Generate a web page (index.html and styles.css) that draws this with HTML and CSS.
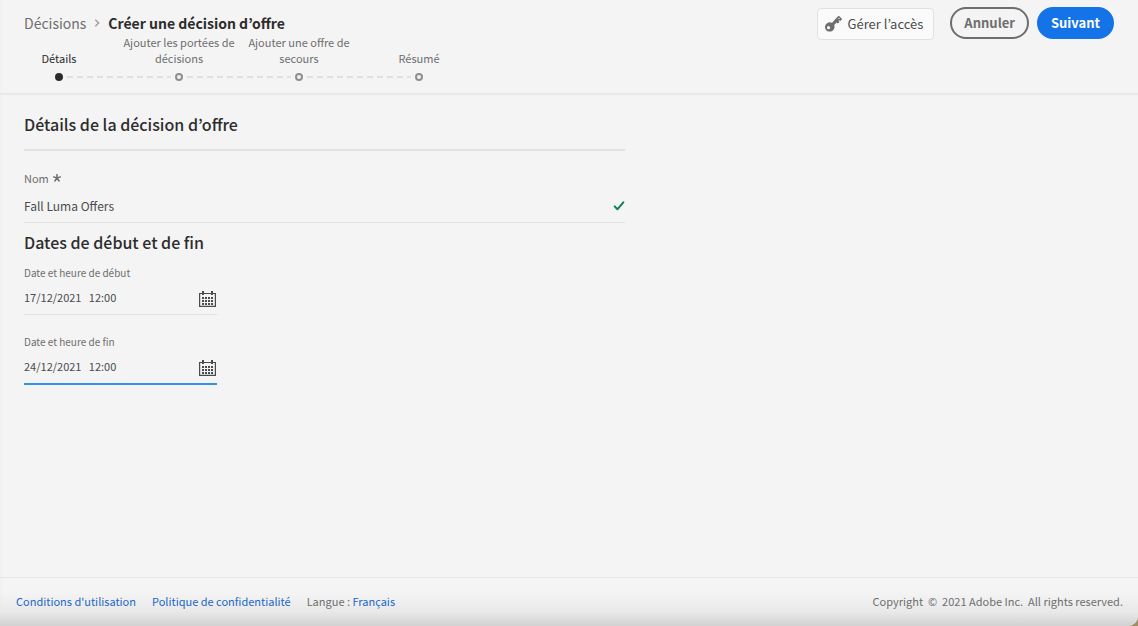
FILE: index.html
```html
<!DOCTYPE html>
<html lang="fr">
<head>
    <meta charset="UTF-8">
    <meta name="viewport" content="width=device-width, initial-scale=1.0">
    <title>Créer une décision d’offre</title>
    <link rel="stylesheet" href="styles.css">
</head>
<body>
    <div class="page">
        <header class="header">
            <div class="header-left">
                <nav class="breadcrumb">
                    <a href="#">Décisions</a>
                    <svg class="chevron" viewBox="0 0 6 8" width="6" height="8"><path d="M1.3 .8 4.6 4 1.3 7.2" fill="none" stroke="#a0a0a0" stroke-width="1.5"/></svg>
                    <h1>Créer une décision d’offre</h1>
                </nav>
                <ol class="steps">
                    <li class="step active"><span>Détails</span><div class="marker"><i class="dot"></i></div></li>
                    <li class="step"><span>Ajouter les portées de décisions</span><div class="marker"><i class="dot"></i></div></li>
                    <li class="step"><span>Ajouter une offre de secours</span><div class="marker"><i class="dot"></i></div></li>
                    <li class="step"><span>Résumé</span><div class="marker"><i class="dot"></i></div></li>
                </ol>
            </div>
            <div class="actions">
                <button type="button" class="btn-access">
                    <svg viewBox="0 0 18 16" width="18" height="16"><path fill="#6e6e6e" fill-rule="evenodd" d="M14 .3a1 1 0 0 1 1.4 0l2.2 2.1a1 1 0 0 1 0 1.4l-1.2 1.3-1.2-.9-.7.6 1 1.1-1.6 1.5-1.2-.9-2.5 2.4c.8 2.2.2 4.2-1.3 5.5-2.2 1.8-5.2 1.5-6.9-.4-1.6-2-1.3-4.9.8-6.6 1.6-1.3 3.6-1.4 5.3-.6zM4.5 10.1a1.6 1.6 0 1 0 .1 3.2 1.6 1.6 0 0 0-.1-3.2zM14.9 1.8a.6.6 0 1 0 .1 1.2.6.6 0 0 0-.1-1.2z"/></svg>
                    Gérer l’accès
                </button>
                <button type="button" class="btn btn-outline">Annuler</button>
                <button type="button" class="btn btn-primary">Suivant</button>
            </div>
        </header>

        <main class="content">
            <h2 class="ruled">Détails de la décision d’offre</h2>

            <div class="field name-field">
                <label for="name">Nom
                    <svg viewBox="0 0 8 8" width="8" height="8"><path d="M4 4V.4M4 4 .6 2.9M4 4l3.4-1.1M4 4 1.9 7M4 4l2.1 3" fill="none" stroke="#6e6e6e" stroke-width="1.5" stroke-linecap="round"/></svg>
                </label>
                <div class="control">
                    <input type="text" id="name" value="Fall Luma Offers">
                    <svg viewBox="0 0 12 10" width="12" height="10"><path d="M1.7 5.4 4.4 8.3 10.3 1.3" fill="none" stroke="#12805c" stroke-width="2" stroke-linecap="round" stroke-linejoin="round"/></svg>
                </div>
            </div>

            <h2>Dates de début et de fin</h2>

            <div class="field date-field">
                <label for="start">Date et heure de début</label>
                <div class="control">
                    <input type="text" id="start" value="17/12/2021   12:00">
                    <button type="button" class="btn-calendar" aria-label="Calendrier de début">
                        <svg viewBox="0 0 17 16" width="17" height="16"><path d="M.6 2.5h15.8v12.9H.6z" fill="none" stroke="#4b4b4b" stroke-width="1.2"/><path d="M4 0v4M13 0v4" stroke="#4b4b4b" stroke-width="2"/><path d="M3 7h11M3 10h11M3 13h11" stroke="#4b4b4b" stroke-width="2" stroke-dasharray="2 1"/></svg>
                    </button>
                </div>
            </div>

            <div class="field date-field focused">
                <label for="end">Date et heure de fin</label>
                <div class="control">
                    <input type="text" id="end" value="24/12/2021   12:00">
                    <button type="button" class="btn-calendar" aria-label="Calendrier de fin">
                        <svg viewBox="0 0 17 16" width="17" height="16"><path d="M.6 2.5h15.8v12.9H.6z" fill="none" stroke="#4b4b4b" stroke-width="1.2"/><path d="M4 0v4M13 0v4" stroke="#4b4b4b" stroke-width="2"/><path d="M3 7h11M3 10h11M3 13h11" stroke="#4b4b4b" stroke-width="2" stroke-dasharray="2 1"/></svg>
                    </button>
                </div>
            </div>
        </main>

        <footer class="footer">
            <div class="footer-links">
                <a href="#">Conditions d'utilisation</a>
                <a href="#">Politique de confidentialité</a>
                <span>Langue : <a href="#">Français</a></span>
            </div>
            <span class="copyright">Copyright &nbsp;© &nbsp;2021 Adobe Inc. &nbsp;All rights reserved.</span>
        </footer>
    </div>
</body>
</html>
```
FILE: styles.css
```css
* {
    box-sizing: border-box;
}
body {
    margin: 0;
    background: #a08e68;
    color: #6e6e6e;
    font-family: "Noto Sans CJK JP", "Noto Sans", sans-serif;
    font-size: 11px;
    line-height: 16px;
}
button, input {
    font-family: inherit;
}
svg {
    flex: none;
}
a {
    color: #1b66c9;
    text-decoration: none;
}
.page {
    display: flex;
    flex-direction: column;
    min-height: 100vh;
    background: #f4f4f4;
    border-bottom-right-radius: 10px;
    box-shadow: inset 2px 0 #f1f1f1;
    overflow: hidden;
}

/* header */
.header {
    display: flex;
    justify-content: space-between;
    align-items: flex-start;
    padding: 7px 24px 8px 0;
    border-bottom: 2px solid #e8e8e8;
}
.breadcrumb {
    display: flex;
    align-items: center;
    gap: 8px;
    height: 27px;
    padding: 5px 0 0 24px;
    font-size: 14px;
    line-height: 24px;
}
.breadcrumb a {
    color: #6e6e6e;
}
.breadcrumb h1 {
    margin: 0;
    color: #2c2c2c;
    font-size: 14px;
    font-weight: 700;
}
.steps {
    display: grid;
    grid-template-columns: repeat(4, 120px);
    margin: 0 0 0 -1px;
    padding: 0;
    list-style: none;
}
.step {
    display: flex;
    flex-direction: column;
    justify-content: flex-end;
    text-align: center;
}
.step span {
    padding: 0 4px;
}
.step.active {
    color: #2c2c2c;
}
.marker {
    display: flex;
    align-items: center;
    gap: 4px;
    height: 16px;
    margin-top: 3px;
}
.marker::before, .marker::after {
    content: "";
    flex: 1;
    height: 2px;
    background: repeating-linear-gradient(90deg, #e0e0e0 0 6px, transparent 6px 10px);
}
.marker::before {
    background: repeating-linear-gradient(90deg, #e0e0e0 0 4px, transparent 4px 8px, #e0e0e0 8px 10px);
}
.step:first-child .marker::before, .step:last-child .marker::after {
    background: none;
}
.dot {
    width: 8px;
    height: 8px;
    border: 2px solid #8e8e8e;
    border-radius: 50%;
}
.active .dot {
    border-color: #2c2c2c;
    background: #2c2c2c;
}
.actions {
    display: flex;
    gap: 8px;
}
.btn, .btn-access {
    height: 32px;
    cursor: pointer;
}
.btn {
    padding: 0 12px 2px;
    border: 2px solid #6e6e6e;
    border-radius: 16px;
    background: none;
    color: #6e6e6e;
    font-size: 13px;
    font-weight: 700;
}
.btn-primary {
    border-color: #1473e6;
    background: #1473e6;
    color: #fff;
}
.btn-access {
    display: flex;
    align-items: center;
    gap: 6px;
    margin: 1px 8px 0 0;
    padding: 0 10px 1px 6px;
    border: 1px solid #e1e1e1;
    border-radius: 4px;
    background: #fafafa;
    color: #4b4b4b;
    font-size: 13px;
}

/* form */
.content {
    flex: 1;
    padding: 17px 24px;
}
h2 {
    margin: 0;
    color: #2c2c2c;
    font-size: 16px;
    font-weight: 500;
    line-height: 24px;
}
h2.ruled {
    max-width: 601px;
    height: 39px;
    margin-bottom: 19px;
    border-bottom: 2px solid #e1e1e1;
}
.field label {
    display: flex;
    align-items: center;
    gap: 4px;
}
.control {
    display: flex;
    align-items: center;
    border-bottom: 1px solid #e1e1e1;
}
.control input {
    flex: 1;
    min-width: 0;
    height: 24px;
    padding: 0;
    border: 0;
    outline: none;
    background: none;
    color: #4b4b4b;
    font-size: 12px;
}
.name-field {
    max-width: 601px;
    margin-bottom: 7px;
}
.name-field .control {
    height: 37px;
    padding-top: 3px;
}
.date-field {
    width: 193px;
    margin: 11px 0 19px;
}
.date-field label {
    font-size: 10px;
}
.date-field .control {
    height: 34px;
}
.date-field input {
    padding-bottom: 2px;
    font-size: 11px;
}
.focused .control {
    height: 35px;
    border-bottom: 2px solid #378ef0;
}
.btn-calendar {
    display: flex;
    padding: 2px 1px 0 0;
    border: 0;
    background: none;
    cursor: pointer;
}

/* footer */
.footer {
    display: flex;
    justify-content: space-between;
    align-items: center;
    height: 49px;
    padding: 0 15px 2px 16px;
    border-top: 1px solid #e8e8e8;
    background: linear-gradient(transparent 30%, #e9e9e9 70%, #d2d2d2);
}
.footer-links {
    display: flex;
    gap: 16px;
}
```
